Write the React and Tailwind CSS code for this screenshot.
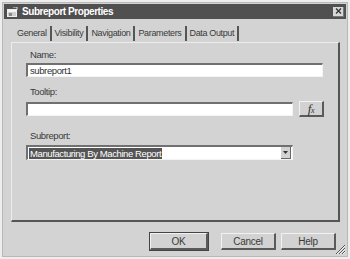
import React from "react";

const font = { fontFamily: '"Liberation Sans", Arial, sans-serif' };

const Sunken = ({ className = "", children }) => (
  <div className={`border-t-[2px] border-l-[2px] border-t-[#707070] border-l-[#707070] border-b border-r border-b-[#f4f4f4] border-r-[#f4f4f4] bg-white ${className}`}>
    {children}
  </div>
);

const Btn = ({ children, className = "" }) => (
  <div className={`flex items-center justify-center border-t border-l border-t-[#f2f2f2] border-l-[#f2f2f2] border-b-[2px] border-r-[2px] border-b-[#5a5a5a] border-r-[#5a5a5a] bg-[#d2d2d2] text-[10px] tracking-[-0.3px] text-[#3a3a3a] ${className}`}>
    {children}
  </div>
);

const Tab = ({ label }) => (
  <div className="flex items-center h-[15px] pr-[3px] mr-[3px] border-r-[2px] border-r-[#555]">
    <span className="text-[9px] tracking-[-0.35px] text-[#3a3a3a] leading-none">{label}</span>
  </div>
);

export default function App() {
  return (
    <div className="w-[350px] h-[259px] bg-[#eeeeee] p-[2px]" style={font}>
      <div className="h-full flex flex-col bg-[#d3d3d3] border border-[#b8b8b8] relative">
        {/* title bar */}
        <div className="mx-[1px] mt-[1px] h-[15px] bg-[#505050] flex items-center pl-[3px] pr-[2px]">
          <svg width="11" height="10" viewBox="0 0 11 10" className="mr-[4px]">
            <rect x="0.5" y="2.5" width="9" height="7" fill="#cfcfcf" stroke="#eee" />
            <rect x="1" y="3" width="8" height="2" fill="#f4f4f4" />
            <rect x="2" y="6" width="3" height="3" fill="#8a8a8a" />
            <path d="M6 0 L10 0 L10 3" stroke="#ddd" fill="none" />
          </svg>
          <span className="text-white font-bold text-[10px] tracking-[-0.45px] leading-none">Subreport Properties</span>
          <div className="ml-auto w-[11px] h-[10px] bg-[#d8d8d8] border-r border-b border-[#777] flex items-center justify-center">
            <svg width="7" height="6" viewBox="0 0 7 6">
              <path d="M1 0.5 L6 5.5 M6 0.5 L1 5.5" stroke="#333" strokeWidth="1.3" />
            </svg>
          </div>
        </div>

        {/* tabs */}
        <div className="flex items-center pl-[14px] mt-[7px] h-[15px]">
          <Tab label="General" />
          <Tab label="Visibility" />
          <Tab label="Navigation" />
          <Tab label="Parameters" />
          <Tab label="Data Output" />
        </div>

        {/* panel */}
        <div className="ml-[8px] w-[329px] mt-[1px] h-[180px] border-t border-l border-t-[#ececec] border-l-[#ececec] border-r-[2px] border-b-[2px] border-r-[#555] border-b-[#555] pl-[14px] pt-[5px] text-[9.5px] tracking-[-0.4px] text-[#3a3a3a]">
          <div className="pl-[4px] leading-[13px]">Name:</div>
          <Sunken className="mt-[2px] w-[297px] h-[14px] flex items-center pl-[2px]">
            <span className="leading-none text-[#333]">subreport1</span>
          </Sunken>

          <div className="pl-[4px] mt-[8px] leading-[13px]">Tooltip:</div>
          <div className="flex items-center mt-[3px]">
            <Sunken className="w-[267px] h-[14px]" />
            <Btn className="ml-[6px] w-[25px] h-[16px]">
              <span className="italic text-[13px] text-[#333]" style={{ fontFamily: '"Liberation Serif", serif' }}>
                f<span className="text-[8px]">x</span>
              </span>
            </Btn>
          </div>

          <div className="pl-[4px] mt-[12px] leading-[13px]">Subreport:</div>
          <Sunken className="mt-[3px] w-[267px] h-[15px] flex items-center pl-[1px] pr-[1px]">
            <span className="bg-[#555] text-white leading-[11px] px-[1px]">Manufacturing By Machine Report</span>
            <div className="ml-auto w-[10px] h-[12px] bg-[#d2d2d2] border-r border-b border-[#666] flex items-center justify-center">
              <svg width="5" height="3" viewBox="0 0 5 3"><path d="M0 0 L5 0 L2.5 3 Z" fill="#333" /></svg>
            </div>
          </Sunken>
        </div>

        {/* buttons */}
        <div className="flex mt-[11px] pl-[147px]">
          <Btn className="w-[58px] h-[17px] outline outline-1 outline-[#444]">OK</Btn>
          <Btn className="ml-[13px] w-[55px] h-[17px]">Cancel</Btn>
          <Btn className="ml-[5px] w-[55px] h-[17px]">Help</Btn>
        </div>

        {/* resize grip */}
        <svg width="11" height="11" viewBox="0 0 11 11" className="absolute right-[1px] bottom-[1px]">
          <path d="M10 1 L1 10 M10 4 L4 10 M10 7 L7 10" stroke="#555" strokeWidth="1" />
          <path d="M10 2 L2 10 M10 5 L5 10 M10 8 L8 10" stroke="#f4f4f4" strokeWidth="1" />
        </svg>
      </div>
    </div>
  );
}
